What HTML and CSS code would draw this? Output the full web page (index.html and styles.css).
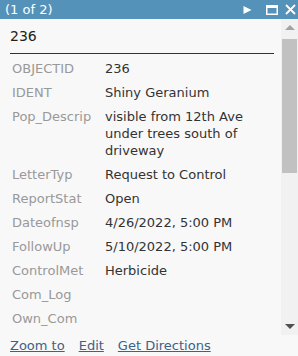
FILE: index.html
```html
<!DOCTYPE html>
<html>
<head>
<meta charset="utf-8">
<link rel="stylesheet" href="styles.css">
</head>
<body>
<div class="popup">
  <div class="header">
    <span class="title">(1 of 2)</span>
    <div class="actions">
      <svg class="ic play" width="9" height="10" viewBox="0 0 9 10"><polygon points="0.5,1 8.5,5 0.5,9" fill="#fff"/></svg>
      <svg class="ic max" width="12" height="10" viewBox="0 0 12 10"><rect x="0.75" y="0.75" width="10.5" height="8.5" fill="none" stroke="#fff" stroke-width="1.5"/><rect x="0" y="0" width="12" height="3" fill="#fff"/></svg>
      <svg class="ic close" width="11" height="11" viewBox="0 0 11 11"><path d="M1 1 L10 10 M10 1 L1 10" stroke="#fff" stroke-width="1.8"/></svg>
    </div>
  </div>
  <div class="main">
    <div class="content">
      <div class="feat-title">236</div>
      <table class="attrs">
        <tr><td class="lbl">OBJECTID</td><td class="val">236</td></tr>
        <tr><td class="lbl">IDENT</td><td class="val">Shiny Geranium</td></tr>
        <tr><td class="lbl">Pop_Descrip</td><td class="val">visible from 12th Ave under trees south of driveway</td></tr>
        <tr><td class="lbl">LetterTyp</td><td class="val">Request to Control</td></tr>
        <tr><td class="lbl">ReportStat</td><td class="val">Open</td></tr>
        <tr><td class="lbl">Dateofnsp</td><td class="val">4/26/2022, 5:00 PM</td></tr>
        <tr><td class="lbl">FollowUp</td><td class="val">5/10/2022, 5:00 PM</td></tr>
        <tr><td class="lbl">ControlMet</td><td class="val">Herbicide</td></tr>
        <tr><td class="lbl">Com_Log</td><td class="val"></td></tr>
        <tr><td class="lbl">Own_Com</td><td class="val"></td></tr>
      </table>
    </div>
    <div class="scrollbar">
      <div class="arrow up"></div>
      <div class="thumb"></div>
      <div class="track"></div>
      <div class="arrow down"></div>
    </div>
  </div>
  <div class="footer">
    <a class="link">Zoom to</a>
    <a class="link">Edit</a>
    <a class="link">Get Directions</a>
  </div>
</div>
</body>
</html>
```
FILE: styles.css
```css
html, body {
  margin: 0;
  padding: 0;
}
body {
  width: 298px;
  height: 356px;
  background: #f8f8f8;
  font-family: "DejaVu Sans", "Liberation Sans", sans-serif;
  overflow: hidden;
}
.popup {
  display: flex;
  flex-direction: column;
  height: 356px;
}
.header {
  height: 19px;
  background: #5592b9;
  display: flex;
  align-items: center;
  justify-content: space-between;
  padding: 0 2px 0 5px;
}
.title {
  color: #fff;
  font-size: 13px;
  line-height: 19px;
}
.actions {
  display: flex;
  align-items: center;
}
.ic { display: block; }
.play { margin-right: 14px; }
.max { margin-right: 7px; }
.main {
  display: flex;
  height: 316px;
}
.content {
  flex: 1;
  overflow: hidden;
  padding: 0 7px 0 10px;
}
.feat-title {
  font-size: 14px;
  color: #222;
  padding: 8px 0 7px 0;
  line-height: 19px;
  border-bottom: 1.5px solid #333;
}
.attrs {
  border-collapse: collapse;
  margin-top: 2px;
  font-size: 13px;
  line-height: 17px;
}
.attrs td {
  padding: 3.5px 2px;
  vertical-align: top;
}
.lbl {
  color: #999;
  width: 89px;
  white-space: nowrap;
}
.val {
  color: #333;
}
.scrollbar {
  width: 17px;
  display: flex;
  flex-direction: column;
  background: #f1f1f1;
}
.arrow {
  height: 17px;
  display: flex;
  align-items: center;
  justify-content: center;
}
.arrow.up::after {
  content: "";
  border-left: 5px solid transparent;
  border-right: 5px solid transparent;
  border-bottom: 5px solid #a3a3a3;
}
.arrow.down::after {
  content: "";
  border-left: 5px solid transparent;
  border-right: 5px solid transparent;
  border-top: 5px solid #505050;
}
.thumb {
  height: 134px;
  margin: 3px 1px 0 1px;
  background: #c1c1c1;
}
.track { flex: 1; }
.footer {
  height: 21px;
  display: flex;
  align-items: center;
  gap: 14px;
  padding: 0 10px;
}
.link {
  color: #3c6287;
  font-size: 13px;
  text-decoration: underline;
  cursor: pointer;
}
```
